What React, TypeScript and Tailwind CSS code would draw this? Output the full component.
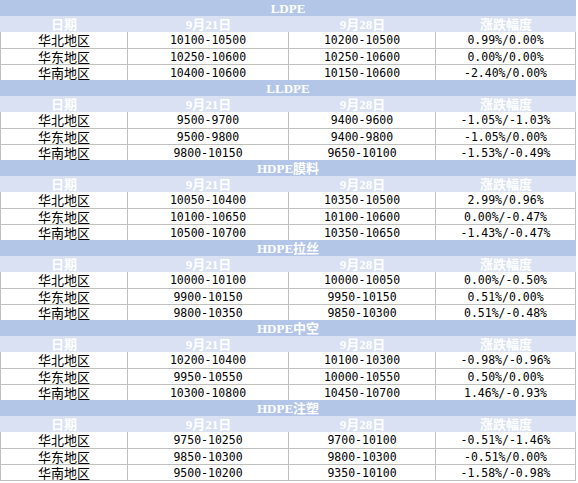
const sections = [
  {
    title: 'LDPE',
    rows: [
      ['华北地区', '10100-10500', '10200-10500', '0.99%/0.00%'],
      ['华东地区', '10250-10600', '10250-10600', '0.00%/0.00%'],
      ['华南地区', '10400-10600', '10150-10600', '-2.40%/0.00%'],
    ],
  },
  {
    title: 'LLDPE',
    rows: [
      ['华北地区', '9500-9700', '9400-9600', '-1.05%/-1.03%'],
      ['华东地区', '9500-9800', '9400-9800', '-1.05%/0.00%'],
      ['华南地区', '9800-10150', '9650-10100', '-1.53%/-0.49%'],
    ],
  },
  {
    title: 'HDPE膜料',
    rows: [
      ['华北地区', '10050-10400', '10350-10500', '2.99%/0.96%'],
      ['华东地区', '10100-10650', '10100-10600', '0.00%/-0.47%'],
      ['华南地区', '10500-10700', '10350-10650', '-1.43%/-0.47%'],
    ],
  },
  {
    title: 'HDPE拉丝',
    rows: [
      ['华北地区', '10000-10100', '10000-10050', '0.00%/-0.50%'],
      ['华东地区', '9900-10150', '9950-10150', '0.51%/0.00%'],
      ['华南地区', '9800-10350', '9850-10300', '0.51%/-0.48%'],
    ],
  },
  {
    title: 'HDPE中空',
    rows: [
      ['华北地区', '10200-10400', '10100-10300', '-0.98%/-0.96%'],
      ['华东地区', '9950-10550', '10000-10550', '0.50%/0.00%'],
      ['华南地区', '10300-10800', '10450-10700', '1.46%/-0.93%'],
    ],
  },
  {
    title: 'HDPE注塑',
    rows: [
      ['华北地区', '9750-10250', '9700-10100', '-0.51%/-1.46%'],
      ['华东地区', '9850-10300', '9800-10300', '-0.51%/0.00%'],
      ['华南地区', '9500-10200', '9350-10100', '-1.58%/-0.98%'],
    ],
  },
];

const heads = ['日期', '9月21日', '9月28日', '涨跌幅度'];

const grid = 'grid grid-cols-[128px_161px_147px_140px]';
const headFont = "font-['Liberation_Serif','Noto_Sans_CJK_SC',serif] font-bold text-white";

export default function App() {
  return (
    <div className="w-[578px] h-[483px] bg-white">
      <div className="w-[576px]">
        {sections.map((s) => (
          <div key={s.title}>
            <div className={`h-4 bg-[#b4c6e7] text-center text-[13px] leading-[15px] pt-px ${headFont}`}>
              {s.title}
            </div>
            <div className={`${grid} h-4 bg-[#d9e1f2] text-[13px] leading-[15px] pt-px ${headFont}`}>
              {heads.map((h) => (
                <div key={h} className="text-center">
                  {h}
                </div>
              ))}
            </div>
            {s.rows.map((r, i) => (
              <div
                key={r[0]}
                className={`${grid} h-4 text-black ${i > 0 ? 'border-t border-[#c0c0c0]' : ''}`}
              >
                <div className="border-l border-r border-[#c0c0c0] pt-px text-center text-[13px] leading-[14px] font-['Noto_Sans_CJK_SC',sans-serif]">
                  {r[0]}
                </div>
                {r.slice(1).map((v, j) => (
                  <div
                    key={j}
                    className="border-r border-[#c0c0c0] pt-px text-center text-[11.5px] leading-[14px] font-['DejaVu_Sans_Mono','Noto_Sans_CJK_SC',monospace]"
                  >
                    {v}
                  </div>
                ))}
              </div>
            ))}
          </div>
        ))}
        <div className="h-px bg-[#c0c0c0]" />
      </div>
    </div>
  );
}
